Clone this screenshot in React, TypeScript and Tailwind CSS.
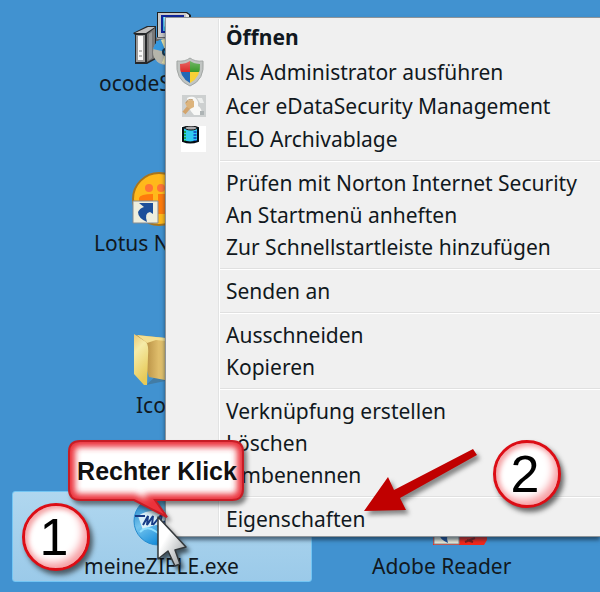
import React from "react";

function SetupIcon() {
  return (
    <svg className="block h-[54px] w-[60px]" viewBox="0 0 60 54" aria-hidden="true">
      <path d="M24 0H54L58 3V26H24z" fill="#1d2022" />
      <path d="M25 1H53V25H25z" fill="#c9c9c9" />
      <path d="M53 1L56 3V25L53 24z" fill="#e8e8e8" />
      <path d="M28 3H51V21H28z" fill="#10249a" />
      <path d="M30 5H49V19H30z" fill="#47c5f5" />
      <path d="M31 5H42L31 15z" fill="#a5eaff" />
      <path d="M24 25H56V29H21z" fill="#666" />
      <path d="M24 26H54V27H24z" fill="#aaa" />
      <path d="M0 21L14 14H23V47L14 52H2V23z" fill="#26282a" />
      <path d="M2 21L15 15H22L13 21z" fill="#c0c0c0" />
      <path d="M3 23H12V50H3z" fill="#999" />
      <path d="M5 24H10V48H5z" fill="#fafafa" />
      <path d="M6 38H9V40H6zM6 43H9V45H6z" fill="#c0c0c0" />
      <path d="M14 22L22 16V46L14 50z" fill="#777" />
      <path d="M16 22L19 20V46L16 48z" fill="#999" />
      <circle cx="33" cy="40" r="13" fill="#b5b5ab" />
      <path d="M33 40L20 37Q23 28 29 27z" fill="#3597dd" />
      <path d="M33 40L28 28Q33 26 39 28z" fill="#eee6aa" />
      <path d="M33 40L39 52Q34 54 29 51z" fill="#eee6aa" />
      <circle cx="33" cy="40" r="4" fill="#17334a" />
      <circle cx="33" cy="40" r="2" fill="#1c95d5" />
    </svg>
  );
}

function ShortcutArrow() {
  return (
    <g>
      <path d="M1 1H26V23H1z" fill="#eeeedd" stroke="#858b90" />
      <path d="M7 3H21V14L18 12Q12 13 15 22Q6 18 6 12Q8 8 12 7z" fill="#1c4f9a" />
    </g>
  );
}

function LotusIcon() {
  return (
    <svg className="block h-[54px] w-[56px]" viewBox="0 0 56 54" aria-hidden="true">
      <circle cx="28" cy="27" r="26" fill="#ffb91b" stroke="#a8741c" strokeWidth="2" />
      <g fill="#ff7b0b">
        <circle cx="18" cy="16" r="4" fill="#ff7435" />
        <circle cx="30" cy="16" r="4" fill="#ff7435" />
        <path d="M8 26Q9 22 22 22V34H8zM27 22H36V42H27z" />
      </g>
      <g transform="translate(1 28)"><ShortcutArrow /></g>
    </svg>
  );
}

function FolderIcon() {
  return (
    <svg className="block h-[52px] w-[56px]" viewBox="0 0 56 52" aria-hidden="true">
      <defs>
        <linearGradient id="folder-front" x2=".3" y2="1">
          <stop stopColor="#eac875" /><stop offset=".35" stopColor="#f5eba8" /><stop offset="1" stopColor="#e8ca58" />
        </linearGradient>
        <linearGradient id="folder-back">
          <stop offset=".2" stopColor="#b99145" /><stop offset=".45" stopColor="#dfbd6b" /><stop offset="1" stopColor="#eed779" />
        </linearGradient>
      </defs>
      <path d="M12 51L22 42L36 46z" fill="#427ca5" />
      <path d="M2 1L52 6V50L15 43z" fill="url(#folder-back)" />
      <path d="M0 0L12 8Q15 11 14 22L13 51H10L0 40z" fill="url(#folder-front)" />
      <path d="M3 1L31 4V7L22 6L13 9z" fill="#f3df91" />
    </svg>
  );
}

function ZieleIcon() {
  return (
    <svg className="block h-[50px] w-[50px]" viewBox="0 0 50 50" aria-hidden="true">
      <defs>
        <linearGradient id="ziele" x2=".6" y2="1">
          <stop stopColor="#0d72bc" /><stop offset=".5" stopColor="#74c4ee" /><stop offset="1" stopColor="#0784d7" />
        </linearGradient>
      </defs>
      <circle cx="25" cy="25" r="24" fill="url(#ziele)" stroke="#278cce" />
      <path d="M5 20Q15 12 36 16L42 29Q22 26 10 34z" fill="#e4f4fb" opacity=".9" />
      <path d="M2 20H12M10 29L15 20L14 29L20 20L19 29M20 29L28 19Q30 18 26 29L36 23" fill="none" stroke="#183c87" strokeWidth="2" />
      <path d="M7 36Q14 29 22 35T38 38" fill="none" stroke="#8edfff" strokeWidth="2" />
    </svg>
  );
}

function AdobeIcon() {
  return (
    <svg className="block h-[50px] w-[54px]" viewBox="0 0 54 50" aria-hidden="true">
      <path d="M0 0H48L54 6V45L51 50H0z" fill="#f72719" />
      <path d="M32 47L42 43M34 45L40 47" stroke="#851a17" strokeWidth="2" />
      <g transform="translate(0 26)"><ShortcutArrow /></g>
    </svg>
  );
}

function ShieldIcon() {
  return (
    <svg className="ml-[10px] block h-[30px] w-[28px]" viewBox="0 0 28 30" aria-hidden="true">
      <defs>
        <clipPath id="shield-shape"><path d="M14 4Q18 7 24 7Q25 20 14 26Q3 20 4 7Q10 7 14 4z" /></clipPath>
        <linearGradient id="shield-shine" x2="0" y2="1"><stop stopColor="#fff" stopOpacity=".4" /><stop offset=".5" stopColor="#fff" stopOpacity="0" /></linearGradient>
      </defs>
      <path d="M14 1Q19 5 27 4Q29 23 14 29Q-1 23 1 4Q9 5 14 1z" fill="#c1c5c3" stroke="#a2a6a4" />
      <g clipPath="url(#shield-shape)">
        <path d="M0 0H14V15H0z" fill="#dc2927" /><path d="M14 0H28V15H14z" fill="#399928" />
        <path d="M0 15H14V30H0z" fill="#2369b6" /><path d="M14 15H28V30H14z" fill="#f7d136" />
        <path d="M0 0H28V30H0z" fill="url(#shield-shine)" />
      </g>
    </svg>
  );
}

function AcerIcon() {
  return (
    <svg className="ml-4 block h-[22px] w-6" viewBox="0 0 24 22" aria-hidden="true">
      <path d="M0 0H24V22H0z" fill="#cdd0d0" />
      <path d="M5 3Q13-1 16 7V11Q20 13 20 20H12Q8 16 7 12z" fill="#f8f8f6" />
      <path d="M15 3H20L22 8H18z" fill="#eceeed" />
      <path d="M18 16H22V20H18z" fill="#aeb4b5" />
      <path d="M2 18L7 12" stroke="#d3a46c" strokeWidth="4" />
      <path d="M3 8Q7 3 12 6V12L8 14L5 12z" fill="#ddb47c" />
      <path d="M4 8Q6 3 11 5" fill="none" stroke="#b99669" />
    </svg>
  );
}

function DatabaseIcon() {
  return (
    <svg className="ml-[15px] block h-[26px] w-[25px]" viewBox="0 0 25 26" aria-hidden="true">
      <path d="M0 0H25V26H0z" fill="white" />
      <path d="M2 2Q10-1 17 2V15Q9 18 2 15z" fill="#2fcaf0" stroke="#050d13" strokeWidth="2" />
      <path d="M4 5V15" stroke="#18a552" strokeWidth="2" strokeDasharray="2 1" />
      <path d="M14 5V15" stroke="#125dca" strokeWidth="3" strokeDasharray="2 1" />
      <ellipse cx="10" cy="2" rx="6" ry="2" fill="#a9aaae" stroke="#111" />
    </svg>
  );
}

type Entry = { label: string; icon?: React.ReactNode; row?: string; bold?: boolean };

const groups: Entry[][] = [
  [
    { label: "Öffnen", row: "h-9", bold: true },
    { label: "Als Administrator ausführen", row: "h-[34px]", icon: <ShieldIcon /> },
    { label: "Acer eDataSecurity Management", row: "h-[34px]", icon: <AcerIcon /> },
    { label: "ELO Archivablage", icon: <DatabaseIcon /> },
  ],
  [{ label: "Prüfen mit Norton Internet Security" }, { label: "An Startmenü anheften" }, { label: "Zur Schnellstartleiste hinzufügen" }],
  [{ label: "Senden an" }],
  [{ label: "Ausschneiden" }, { label: "Kopieren" }],
  [{ label: "Verknüpfung erstellen" }, { label: "Löschen" }, { label: "Umbenennen" }],
  [{ label: "Eigenschaften" }],
];

function Gutter({ children }: { children?: React.ReactNode }) {
  return <span className="flex w-[54px] shrink-0 items-center self-stretch border-r border-r-white shadow-[inset_-1px_0_0_#e2e3e3]">{children}</span>;
}

function ContextMenu() {
  return (
    <div role="menu" aria-label="Kontextmenü" className="absolute left-[165px] right-0 top-[17px] border-y border-l border-[#8e9499] bg-[#f0f0f0] py-px shadow-[0_3px_4px_rgba(20,40,60,0.65)]">
      {groups.map((group, i) => (
        <React.Fragment key={i}>
          {i > 0 && (
            <div role="separator" className="flex h-3 items-center">
              <Gutter />
              <span className="h-[2px] grow border-b border-t border-b-white border-t-[#e0e0e0]" />
            </div>
          )}
          {group.map((e) => (
            <button key={e.label} role="menuitem" type="button" className={`flex w-full items-center text-left ${e.row ?? "h-8"}`}>
              <Gutter>{e.icon}</Gutter>
              <span className={`whitespace-nowrap pl-[6px] ${e.bold ? "font-bold" : ""}`}>{e.label}</span>
            </button>
          ))}
        </React.Fragment>
      ))}
    </div>
  );
}

function NumberBadge({ value, place }: { value: string; place: string }) {
  return (
    <div className={`absolute flex size-[68px] items-center justify-center rounded-full border-[3px] border-[#dc0d15] bg-white pr-1 font-['Liberation_Sans',Arial,sans-serif] text-[52px] leading-none text-black shadow-[inset_-4px_-5px_8px_#f79ba0,inset_3px_3px_5px_#f4a5a7,3px_4px_5px_rgba(30,30,30,0.65)] ${place}`}>
      {value}
    </div>
  );
}

function Callout() {
  return (
    <div className="absolute left-[68px] top-[440px] h-[79px] w-[178px]">
      <svg className="absolute inset-0 h-full w-full overflow-visible drop-shadow-[3px_4px_2px_rgba(30,30,30,0.55)]" viewBox="0 0 178 79" aria-hidden="true">
        <defs>
          <clipPath id="bubble"><path d="M12 1H164Q175 1 175 12V49Q175 60 164 60H87L99 77L66 60H12Q1 60 1 49V12Q1 1 12 1z" /></clipPath>
          <filter id="soft"><feGaussianBlur stdDeviation="3" /></filter>
        </defs>
        <g clipPath="url(#bubble)">
          <path d="M0 0H178V79H0z" fill="#fff" />
          <path d="M12 1H164Q175 1 175 12V49Q175 60 164 60H87L99 77L66 60H12Q1 60 1 49V12Q1 1 12 1z" fill="none" stroke="#eb303a" strokeWidth="12" filter="url(#soft)" />
        </g>
        <path d="M12 1H164Q175 1 175 12V49Q175 60 164 60H87L99 77L66 60H12Q1 60 1 49V12Q1 1 12 1z" fill="none" stroke="#c71d25" strokeWidth="2" />
      </svg>
      <p className="relative flex h-[62px] items-center justify-center whitespace-nowrap font-['Liberation_Sans',Arial,sans-serif] text-[25px] font-bold text-[#111]">Rechter Klick</p>
    </div>
  );
}

function Pointers() {
  return (
    <>
      <svg className="absolute left-[362px] top-[446px] h-[72px] w-[118px] overflow-visible drop-shadow-[3px_4px_2px_rgba(30,30,30,0.5)]" viewBox="0 0 118 72" aria-hidden="true">
        <path d="M2 65L26 31L32 44L111 3L115 9L38 52L44 64z" fill="#c00000" />
      </svg>
      <svg className="absolute left-[157px] top-[516px] h-[54px] w-[34px] overflow-visible drop-shadow-[3px_4px_2px_rgba(0,0,0,0.6)]" viewBox="0 0 34 54" aria-hidden="true">
        <defs><linearGradient id="cursor" x2="1" y2="1"><stop offset=".35" stopColor="#fff" /><stop offset="1" stopColor="#8f9598" /></linearGradient></defs>
        <path d="M1 1V43L11 35L18 50L23 48L18 34L29 31z" fill="url(#cursor)" stroke="#33383b" strokeWidth="1.5" strokeLinejoin="round" />
      </svg>
    </>
  );
}

function DesktopItem({ label, icon, place, iconPad, labelPad, selected }: { label: string; icon: React.ReactNode; place: string; iconPad: string; labelPad: string; selected?: boolean }) {
  return (
    <button type="button" className={`absolute block w-[300px] rounded-[3px] border text-left ${selected ? "h-[91px] border-[#73c5f3] bg-linear-to-b from-[#b0d7ef] to-[#9bcae9]" : "border-transparent"} ${place}`}>
      <span className={`block ${iconPad}`}>{icon}</span>
      <span className={`block whitespace-nowrap leading-8 ${labelPad}`}>{label}</span>
    </button>
  );
}

export default function App() {
  return (
    <main className="relative min-h-screen overflow-hidden bg-[#4192d0] font-['Noto_Sans','Segoe_UI',sans-serif] text-[21px] leading-8 text-[#111820]">
      <DesktopItem label="ocodeS" icon={<SetupIcon />} place="left-[12px] top-[11px]" iconPad="pl-[120px]" labelPad="pt-px pl-[86px]" />
      <DesktopItem label="Lotus N" icon={<LotusIcon />} place="left-[12px] top-[171px]" iconPad="pl-[118px]" labelPad="pt-px pl-[81px]" />
      <DesktopItem label="Ico" icon={<FolderIcon />} place="left-[12px] top-[333px]" iconPad="pl-[121px]" labelPad="pt-[3px] pl-[123px]" />
      <DesktopItem label="meineZIELE.exe" icon={<ZieleIcon />} place="left-[12px] top-[491px]" iconPad="pt-1 pl-[120px]" labelPad="pt-1 pl-[71px]" selected />
      <DesktopItem label="Adobe Reader" icon={<AdobeIcon />} place="left-[361px] top-[494px]" iconPad="pl-[71px]" labelPad="pt-[5px] pl-[10px]" />
      <ContextMenu />
      <Callout />
      <NumberBadge value="1" place="left-[22px] top-[503px]" />
      <NumberBadge value="2" place="left-[493px] top-[440px]" />
      <Pointers />
    </main>
  );
}
